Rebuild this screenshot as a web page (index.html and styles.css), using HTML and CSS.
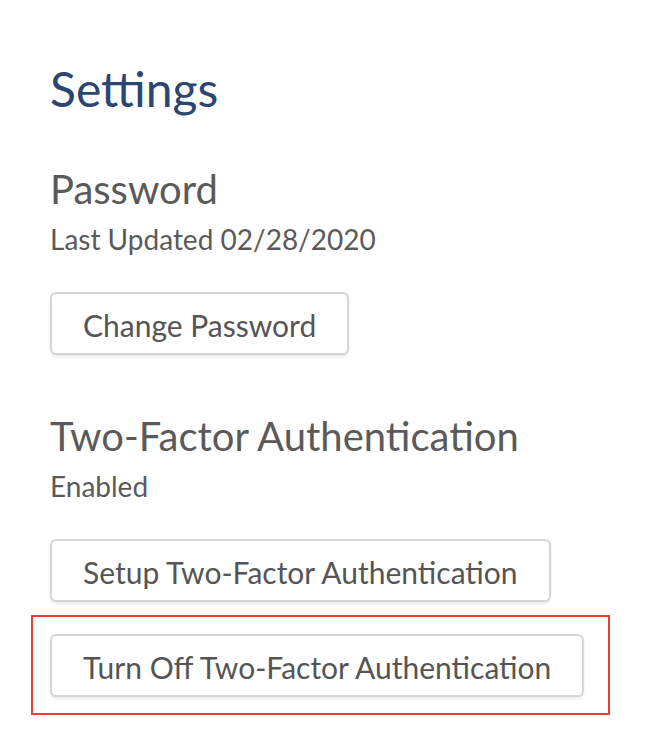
FILE: index.html
```html
<!DOCTYPE html>
<html lang="en">
<head>
<meta charset="utf-8">
<title>Settings</title>
<link rel="stylesheet" href="styles.css">
</head>
<body>
<main class="page">
  <h1 class="page-title">Settings</h1>
  <section class="section section-password">
    <h2 class="section-title">Password</h2>
    <p class="section-meta">Last Updated 02/28/2020</p>
    <div class="actions">
      <button class="btn" type="button">Change Password</button>
    </div>
  </section>
  <section class="section section-2fa">
    <h2 class="section-title">Two-Factor Authentication</h2>
    <p class="section-meta">Enabled</p>
    <div class="actions">
      <button class="btn" type="button">Setup Two-Factor Authentication</button>
      <div class="highlight">
        <button class="btn" type="button">Turn Off Two-Factor Authentication</button>
      </div>
    </div>
  </section>
</main>
</body>
</html>
```

FILE: styles.css
```css
html, body {
  margin: 0;
  padding: 0;
  background: #ffffff;
}

body {
  font-family: Lato, "Open Sans", "Liberation Sans", sans-serif;
  color: #595959;
}

.page {
  display: flex;
  flex-direction: column;
  align-items: flex-start;
  padding: 61px 0 0 50px;
}

.page-title {
  margin: 0;
  font-size: 48px;
  line-height: 56px;
  font-weight: 400;
  color: #2b4771;
}

.section {
  display: flex;
  flex-direction: column;
  align-items: flex-start;
}

.section-password {
  margin-top: 48px;
}

.section-2fa {
  margin-top: 57px;
}

.section-title {
  margin: 0;
  font-size: 40px;
  line-height: 48px;
  font-weight: 400;
  color: #5a5a5a;
}

.section-meta {
  margin: 10px 0 0;
  font-size: 28px;
  line-height: 32px;
  color: #5a5a5a;
}

.actions {
  display: flex;
  flex-direction: column;
  align-items: flex-start;
  margin-top: 37px;
}

.btn {
  font-family: inherit;
  font-size: 30px;
  line-height: 33px;
  color: #555555;
  background: #ffffff;
  border: 2px solid #d6d6d6;
  border-radius: 6px;
  padding: 15px 31px 11px 31px;
  box-shadow: 0 2px 3px rgba(0, 0, 0, 0.08);
  cursor: pointer;
}

.highlight {
  margin: 13px 0 0 -19px;
  padding: 17px 24px 16px 17px;
  border: 2px solid #e5432e;
}
```
